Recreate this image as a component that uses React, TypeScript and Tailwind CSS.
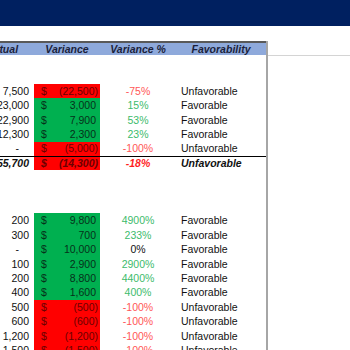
type Tone = "red" | "green";

type Row = {
  actual: string;
  variance: string;
  tone: Tone;
  pct: string;
  pctTone: Tone | "plain";
  fav: string;
};

const section1: Row[] = [
  { actual: "7,500", variance: "(22,500)", tone: "red", pct: "-75%", pctTone: "red", fav: "Unfavorable" },
  { actual: "23,000", variance: "3,000", tone: "green", pct: "15%", pctTone: "green", fav: "Favorable" },
  { actual: "22,900", variance: "7,900", tone: "green", pct: "53%", pctTone: "green", fav: "Favorable" },
  { actual: "12,300", variance: "2,300", tone: "green", pct: "23%", pctTone: "green", fav: "Favorable" },
  { actual: "-", variance: "(5,000)", tone: "red", pct: "-100%", pctTone: "red", fav: "Unfavorable" },
];

const section2: Row[] = [
  { actual: "200", variance: "9,800", tone: "green", pct: "4900%", pctTone: "green", fav: "Favorable" },
  { actual: "300", variance: "700", tone: "green", pct: "233%", pctTone: "green", fav: "Favorable" },
  { actual: "-", variance: "10,000", tone: "green", pct: "0%", pctTone: "plain", fav: "Favorable" },
  { actual: "100", variance: "2,900", tone: "green", pct: "2900%", pctTone: "green", fav: "Favorable" },
  { actual: "200", variance: "8,800", tone: "green", pct: "4400%", pctTone: "green", fav: "Favorable" },
  { actual: "400", variance: "1,600", tone: "green", pct: "400%", pctTone: "green", fav: "Favorable" },
  { actual: "500", variance: "(500)", tone: "red", pct: "-100%", pctTone: "red", fav: "Unfavorable" },
  { actual: "600", variance: "(600)", tone: "red", pct: "-100%", pctTone: "red", fav: "Unfavorable" },
  { actual: "1,200", variance: "(1,200)", tone: "red", pct: "-100%", pctTone: "red", fav: "Unfavorable" },
  { actual: "1,500", variance: "(1,500)", tone: "red", pct: "-100%", pctTone: "red", fav: "Unfavorable" },
];

const cols = "grid grid-cols-[64px_66px_76px_90px] h-[14.4px] items-center leading-none";

function DataRow({ row, total = false }: { row: Row; total?: boolean }) {
  const neg = row.variance.startsWith("(");
  return (
    <div className={`${cols} ${total ? "border-t border-black font-bold italic" : ""}`}>
      <div className={`text-right text-[#111] ${row.actual === "-" ? "pr-[15px]" : "pr-[5px]"}`}>
        {row.actual}
      </div>
      <div
        className={`flex h-full items-center justify-between pl-[7px] ${neg ? "pr-[2px]" : "pr-[4px]"} ${
          row.tone === "red" ? "bg-[#ff0000] text-[#6b0000]" : "bg-[#00b050] text-[#06301a]"
        }`}
      >
        <span>$</span>
        <span>{row.variance}</span>
      </div>
      <div
        className={`text-center ${
          row.pctTone === "red"
            ? total
              ? "text-[#ff1f1f]"
              : "text-[#ff5757]"
            : row.pctTone === "green"
              ? "text-[#3dbb6c]"
              : "text-[#111]"
        }`}
      >
        {row.pct}
      </div>
      <div className="pl-[5px] text-[#111]">{row.fav}</div>
    </div>
  );
}

function BlankRow() {
  return <div className="h-[14.4px]" />;
}

export default function App() {
  return (
    <div className="h-[350px] w-[350px] overflow-hidden bg-white text-[10.5px] [font-family:'Liberation_Sans',Arial,sans-serif]">
      {/* Title band */}
      <div className="h-[26.4px] bg-[#002060]" />
      <div className="h-[14.4px]" />

      <div className="flex">
        {/* Sheet table */}
        <div className="ml-[-30px] w-[298px] shrink-0 border-r-2 border-[#a6a6a6]">
          <div className={`${cols} border-t-2 border-[#595959] bg-[#8ea9db] font-bold italic text-[#1b1f3b]`}>
            <div className="text-center">Actual</div>
            <div className="text-center">Variance</div>
            <div className="text-center">Variance %</div>
            <div className="text-center">Favorability</div>
          </div>
          <BlankRow />
          <BlankRow />
          {section1.map((r, i) => (
            <DataRow key={`a${i}`} row={r} />
          ))}
          <DataRow
            total
            row={{ actual: "55,700", variance: "(14,300)", tone: "red", pct: "-18%", pctTone: "red", fav: "Unfavorable" }}
          />
          <BlankRow />
          <BlankRow />
          <BlankRow />
          {section2.map((r, i) => (
            <DataRow key={`b${i}`} row={r} />
          ))}
        </div>

        {/* Empty sheet area */}
        <div className="flex-1">
          <div className="h-[14.4px]" />
          <div className="border-t border-[#d4d4d4]" />
        </div>
      </div>
    </div>
  );
}
